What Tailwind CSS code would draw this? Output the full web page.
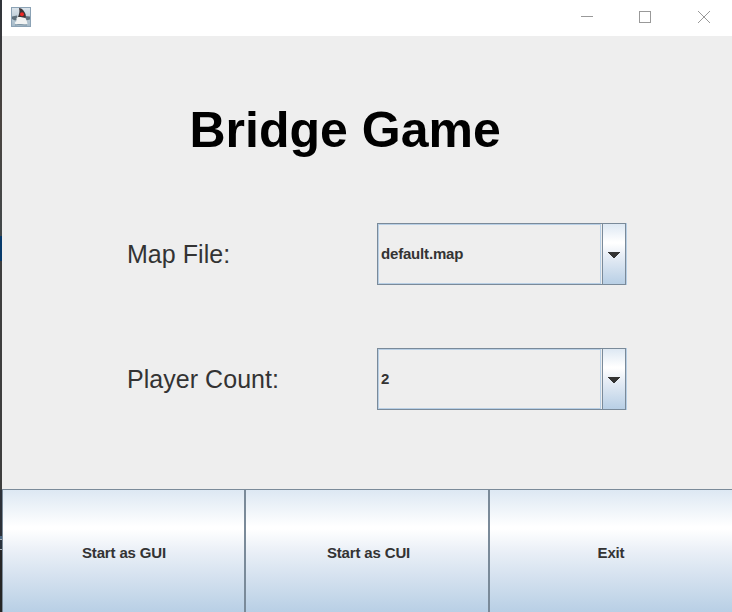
<!DOCTYPE html>
<html lang="en">
<head>
<meta charset="utf-8">
<title>Bridge Game</title>
<script src="https://cdn.jsdelivr.net/npm/@tailwindcss/browser@4"></script>
</head>
<body class="w-[732px] h-[612px] overflow-hidden flex bg-[#eeeeee] font-['Liberation_Sans',Arial,sans-serif] text-[#333333]">
  <div class="w-[2px] h-full shrink-0 flex flex-col bg-[#3b3b3b]">
    <div class="h-[236px] bg-gradient-to-b from-[#30343a] via-[#4a4440] to-[#42484a]"></div>
    <div class="h-[25px] bg-[#073a6b]"></div>
    <div class="h-[229px] bg-[#3e3e3e]"></div>
    <div class="h-[46px] bg-[#2c3038]"></div>
    <div class="h-[3px] bg-[#4b6784]"></div>
    <div class="h-px bg-[#aab0b8]"></div>
    <div class="h-[9px] bg-[#29323c]"></div>
    <div class="h-px bg-[#aab0b8]"></div>
    <div class="grow bg-[#252525]"></div>
  </div>
  <div class="w-[730px] h-full flex flex-col">
    <header class="h-[36px] shrink-0 bg-white flex items-start justify-between pl-[9px]">
      <svg class="mt-[7px]" width="20" height="20" viewBox="0 0 20 20">
        <defs><linearGradient id="sky" x2="0" y2="1"><stop stop-color="#dce5ec"/><stop offset="1" stop-color="#a3b8c6"/></linearGradient></defs>
        <rect x=".5" y=".5" width="19" height="19" fill="url(#sky)" stroke="#8ba2b5"/>
        <path d="M1 9.500l5-1 1 4-3 1-3-1.500zM14 9l5 .5v3l-4 1z" fill="#60717d"/>
        <path d="M5.500 11l3-2 5 1 2 3 1 4-3 1-4-1-4 1-2-2 2-2z" fill="#f1f3f3"/>
        <path d="M8 1c3 0 5 3 6 5 1 2 1 3 .5 5-2 0-3-1-5-1l-2.500 0C8 7 9 5 8 1z" fill="#3d3538"/>
        <circle cx="11" cy="7.300" r="2" fill="#ef2826"/>
        <path d="M4 18c4-1 8 0 12 0" fill="none" stroke="#7890a0"/>
      </svg>
      <svg width="162" height="36" viewBox="0 0 162 36" fill="none" stroke="#999999" shape-rendering="crispEdges">
        <path d="M11 16.500H23"/>
        <rect x="69.500" y="11.500" width="11" height="11"/>
        <path d="M128 11l12 12M140 11l-12 12" shape-rendering="auto"/>
      </svg>
    </header>
    <main class="h-[453px] shrink-0 flex flex-col">
      <h1 class="mt-[65px] ml-[187.500px] h-[58px] leading-[58px] text-[50px] font-bold text-black whitespace-nowrap">Bridge Game</h1>
      <div class="mt-[64px] ml-[125px] flex flex-col gap-[63px]">
        <div class="flex h-[62px] items-center">
          <label class="w-[250px] pt-[2px] text-[25px] tracking-[0.040px] whitespace-nowrap">Map File:</label>
          <div class="w-[249px] h-[62px] border border-[#7a8a99] shadow-[1px_0_0_#b8cfe5] flex">
            <div class="w-[223px] mr-px border border-[#b8cfe5] flex items-center pl-[2px]"><span class="text-[15px] tracking-[-0.180px] font-bold">default.map</span></div>
            <div class="w-[23px] shrink-0 border-l border-[#7a8a99] bg-[linear-gradient(#dde8f3_0%,#ffffff_30%,#ffffff_32%,#e8eef6_52%,#b8cfe5_100%)] flex items-center justify-center">
              <svg width="12" height="6" viewBox="0 0 12 6" class="mt-[2px] shrink-0" shape-rendering="crispEdges"><path d="M0 0h12v1h-1v1h-1v1h-1v1h-1v1h-1v1h-2v-1h-1v-1h-1v-1h-1v-1h-1v-1h-1z" fill="#333333"/></svg>
            </div>
          </div>
        </div>
        <div class="flex h-[62px] items-center">
          <label class="w-[250px] pt-[2px] text-[25px] tracking-[0.040px] whitespace-nowrap">Player Count:</label>
          <div class="w-[249px] h-[62px] border border-[#7a8a99] shadow-[1px_0_0_#b8cfe5] flex">
            <div class="w-[223px] mr-px border border-[#b8cfe5] flex items-center pl-[2px]"><span class="text-[15px] tracking-[-0.180px] font-bold">2</span></div>
            <div class="w-[23px] shrink-0 border-l border-[#7a8a99] bg-[linear-gradient(#dde8f3_0%,#ffffff_30%,#ffffff_32%,#e8eef6_52%,#b8cfe5_100%)] flex items-center justify-center">
              <svg width="12" height="6" viewBox="0 0 12 6" class="mt-[2px] shrink-0" shape-rendering="crispEdges"><path d="M0 0h12v1h-1v1h-1v1h-1v1h-1v1h-1v1h-2v-1h-1v-1h-1v-1h-1v-1h-1v-1h-1z" fill="#333333"/></svg>
            </div>
          </div>
        </div>
      </div>
    </main>
    <footer class="h-[123px] shrink-0 flex text-[15px] tracking-[-0.150px] font-bold">
      <button class="w-[243px] border-t border-x border-[#7a8a99] bg-[linear-gradient(#dde8f3_0%,#ffffff_30%,#ffffff_32%,#e8eef6_52%,#b8cfe5_100%)] pt-[5px] pl-px">Start as GUI</button>
      <button class="w-[244px] border-t border-x border-[#7a8a99] bg-[linear-gradient(#dde8f3_0%,#ffffff_30%,#ffffff_32%,#e8eef6_52%,#b8cfe5_100%)] pt-[5px] pl-[3px]">Start as CUI</button>
      <button class="w-[243px] border-t border-l border-[#7a8a99] bg-[linear-gradient(#dde8f3_0%,#ffffff_30%,#ffffff_32%,#e8eef6_52%,#b8cfe5_100%)] pt-[5px]">Exit</button>
    </footer>
  </div>
</body>
</html>
